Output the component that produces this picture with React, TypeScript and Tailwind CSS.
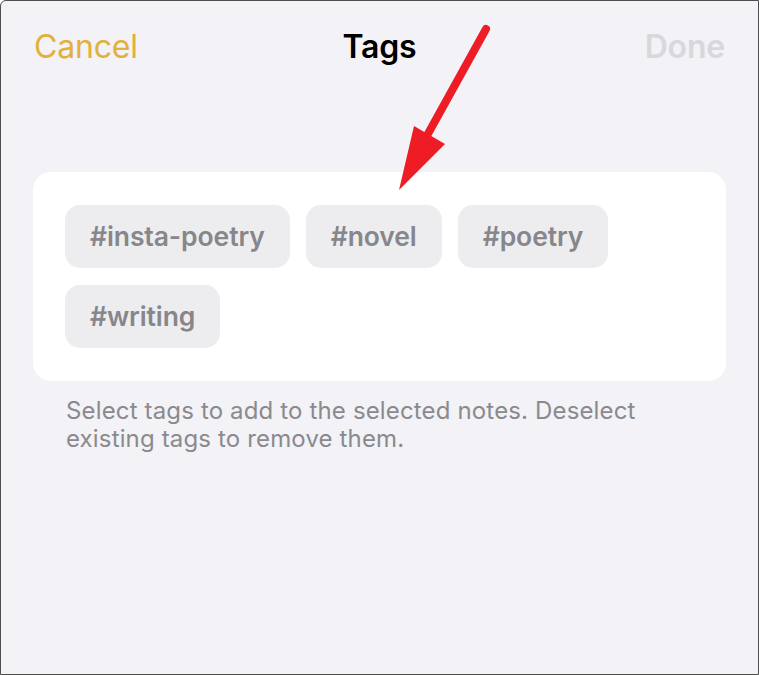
import React from 'react';

const tags = ['#insta-poetry', '#novel', '#poetry', '#writing'];

const Arrow = () => (
  <svg className="absolute left-0 top-0 pointer-events-none" width="759" height="675" viewBox="0 0 759 675">
    <line x1="485" y1="28" x2="423" y2="140" stroke="#ee1c25" strokeWidth="8" strokeLinecap="round" />
    <polygon points="413,125 444,143 398,189" fill="#ee1c25" />
  </svg>
);

export default function App() {
  return (
    <div
      className="relative w-[759px] h-[675px] bg-[#f2f2f7] border border-[#4d4d4d] rounded-tl-[6px] overflow-hidden"
      style={{ fontFamily: 'Inter, "Noto Sans", sans-serif' }}
    >
      <div className="grid grid-cols-3 items-center px-[33px] pt-[24px] h-[68px]">
        <span className="text-[32px] leading-[40px] text-[#e1b13a] tracking-[-0.2px]">Cancel</span>
        <span className="text-center text-[32px] leading-[40px] font-semibold text-black tracking-[-0.2px]">Tags</span>
        <span className="text-right text-[32px] leading-[40px] font-semibold text-[#d8d8dc] tracking-[-0.2px]">Done</span>
      </div>

      <div className="mx-[32px] mt-[103px] bg-white rounded-[18px] px-[32px] py-[33px]">
        <div className="flex flex-wrap gap-x-[16px] gap-y-[17px]">
          {tags.map((t) => (
            <button
              key={t}
              className="h-[63px] px-[25px] rounded-[15px] bg-[#ededef] text-[#86868b] text-[26.5px] font-semibold tracking-[-0.1px]"
            >
              {t}
            </button>
          ))}
        </div>
      </div>

      <p className="ml-[65px] w-[620px] mt-[16px] text-[24px] leading-[28px] tracking-[0.15px] text-[#8a8a8e]">
        Select tags to add to the selected notes. Deselect existing tags to remove them.
      </p>

      <Arrow />
    </div>
  );
}
